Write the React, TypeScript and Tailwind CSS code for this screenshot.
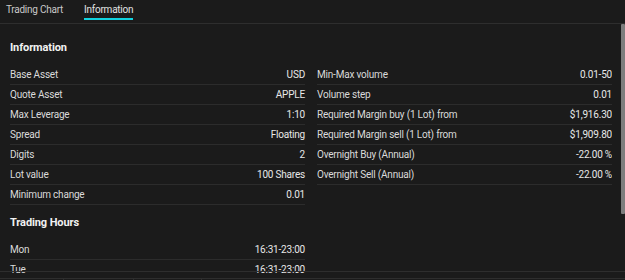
import React from 'react';

const info: [string, string][] = [
  ['Base Asset', 'USD'],
  ['Quote Asset', 'APPLE'],
  ['Max Leverage', '1:10'],
  ['Spread', 'Floating'],
  ['Digits', '2'],
  ['Lot value', '100 Shares'],
  ['Minimum change', '0.01'],
];

const margin: [string, string][] = [
  ['Min-Max volume', '0.01-50'],
  ['Volume step', '0.01'],
  ['Required Margin buy (1 Lot) from', '$1,916.30'],
  ['Required Margin sell (1 Lot) from', '$1,909.80'],
  ['Overnight Buy (Annual)', '-22.00 %'],
  ['Overnight Sell (Annual)', '-22.00 %'],
];

const hours: [string, string][] = [
  ['Mon', '16:31-23:00'],
  ['Tue', '16:31-23:00'],
];

function Row({ label, value }: { label: string; value: string }) {
  return (
    <div className="h-[20px] flex items-center justify-between border-b border-[#2c2c2c] text-[10px] leading-[14px] tracking-[-0.2px]">
      <span className="text-[#dadada]">{label}</span>
      <span className="text-[#e8e8e8]">{value}</span>
    </div>
  );
}

export default function App() {
  return (
    <div className="relative w-[625px] h-[280px] bg-[#1b1b1b] overflow-hidden flex flex-col font-['Roboto',sans-serif]">
      <div className="h-[24px] shrink-0 border-b border-[#2e2e2e] flex items-start gap-[21px] px-[6px] pt-[3px] text-[10px] leading-[14px] tracking-[-0.25px]">
        <button className="text-[#c9c9c9]">Trading Chart</button>
        <button className="text-[#e2e2e2] border-b-2 border-[#12d2df] pb-[1px]">Information</button>
      </div>

      <div className="flex-1 overflow-hidden pl-[10px] w-[612px]">
        <h2 className="mt-[16px] mb-[9px] text-[11px] leading-[16px] font-bold tracking-[-0.1px] text-[#f2f2f2]">Information</h2>
        <div className="grid grid-cols-2 gap-x-[12px] items-start">
          <div>
            {info.map(([l, v]) => (
              <Row key={l} label={l} value={v} />
            ))}
          </div>
          <div>
            {margin.map(([l, v]) => (
              <Row key={l} label={l} value={v} />
            ))}
          </div>
        </div>
        <h2 className="mt-[10px] mb-[9px] text-[11px] leading-[16px] font-bold tracking-[-0.1px] text-[#f2f2f2]">Trading Hours</h2>
        <div className="w-[295px]">
          {hours.map(([l, v]) => (
            <Row key={l} label={l} value={v} />
          ))}
        </div>
      </div>

      <div className="absolute left-0 right-0 top-[271px] h-[9px] border-t border-[#2e2e2e]">
        <div className="mt-[6px] h-full border-t border-[#2e2e2e] bg-[#1b1b1b] flex">
          <div className="w-[64px] border-r border-[#2e2e2e]" />
          <div className="w-[70px] border-r border-[#2e2e2e]" />
          <div className="w-[68px] border-r border-[#2e2e2e]" />
        </div>
      </div>

      <div className="absolute right-[0px] top-[24px] w-[4px] h-[190px] bg-[#7d7d7d] rounded-[1px]" />
    </div>
  );
}
